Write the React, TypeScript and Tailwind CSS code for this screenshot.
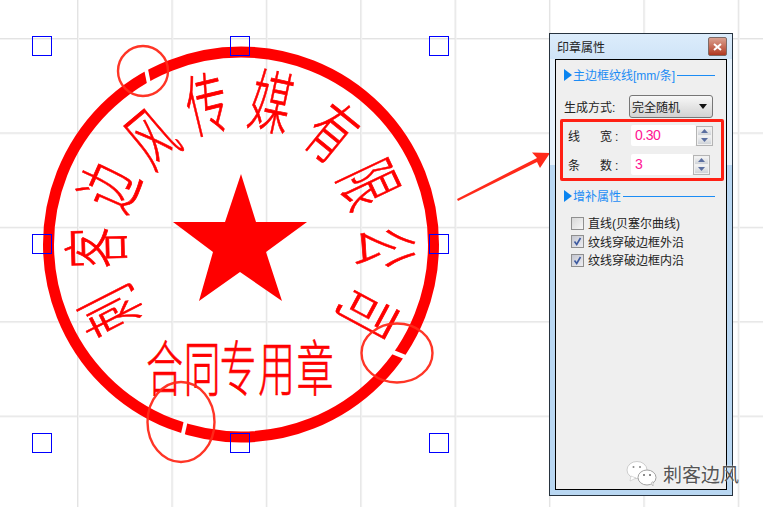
const stampFont = { fontFamily: '"Noto Sans CJK SC", sans-serif' };

const cx = 241;
const cy = 244.5;
const arc: [string, number, number][] = [
  ["刺", 107, 313],
  ["客", 92, 248],
  ["边", 105, 185],
  ["风", 149, 135],
  ["传", 206, 100],
  ["媒", 272, 98],
  ["有", 335, 129],
  ["限", 373, 182],
  ["公", 390, 248],
  ["司", 372, 315],
];
const bottom: [string, number][] = [
  ["合", 164.5],
  ["同", 202],
  ["专", 238],
  ["用", 276.5],
  ["章", 315],
];
const handles: [number, number][] = [
  [32, 36], [230, 36], [429, 36],
  [32, 234], [429, 234],
  [32, 433], [230, 433], [429, 433],
];

function Stamp() {
  return (
    <svg width="763" height="507" className="absolute left-0 top-0" style={stampFont}>
      <circle cx={cx} cy={cy} r="192.5" fill="none" stroke="#ff0000" strokeWidth="11" />
      <path d="M143 64 L147 84 L151 84 L147 64 Z" fill="#fff" />
      <path d="M184 420 L180 438 L184 438 L188 420 Z" fill="#fff" />
      <path d="M384 351 L404 359 L406 355 L386 347 Z" fill="#fff" />
      <polygon
        points="241,174 256,222 307,222 266,252 282,301 240,272 199,301 213,252 173,222 225,222"
        fill="#ff0000"
      />
      {arc.map(([c, x, y]) => {
        const a = (Math.atan2(x - cx, cy - y) * 180) / Math.PI;
        return (
          <text
            key={c}
            transform={`translate(${x} ${y}) rotate(${a}) scale(0.76 1.26)`}
            textAnchor="middle"
            dominantBaseline="central"
            fontSize="54"
            fontWeight="300"
            fill="#ff0000"
            stroke="#ff0000"
            strokeWidth="0.6"
          >
            {c}
          </text>
        );
      })}
      {bottom.map(([c, x]) => (
        <text
          key={c}
          transform={`translate(${x} 364.5) scale(0.68 1.12)`}
          textAnchor="middle"
          dominantBaseline="central"
          fontSize="54"
          fontWeight="300"
          fill="#ff0000"
          stroke="#ff0000"
          strokeWidth="0.6"
        >
          {c}
        </text>
      ))}
      <circle cx="143" cy="71" r="25" fill="none" stroke="#ff2a1a" strokeWidth="2.4" opacity="0.95" />
      <ellipse cx="181" cy="422" rx="33.5" ry="40" fill="none" stroke="#ff2a1a" strokeWidth="2.4" opacity="0.95" />
      <ellipse cx="397" cy="353" rx="35.5" ry="29.5" fill="none" stroke="#ff2a1a" strokeWidth="2.4" opacity="0.95" />
      {handles.map(([x, y]) => (
        <rect key={`${x}-${y}`} x={x + 0.5} y={y + 0.5} width="19" height="19" fill="none" stroke="#0000ff" strokeWidth="1" />
      ))}
      <polygon points="457,199 537,158 532,152.5 550,153 540,168 537,162 458,201" fill="#ff2a1a" />
    </svg>
  );
}

function SectionHeader({ label }: { label: string }) {
  return (
    <div className="flex h-4 items-center text-[12px] leading-4 text-[#1b8cf5]">
      <svg width="8" height="12" className="mr-px shrink-0">
        <polygon points="0,0 8,6 0,12" fill="#0a84f0" />
      </svg>
      <span className="whitespace-nowrap pt-px">{label}</span>
      <span className="ml-[2px] h-px grow bg-[#1b8cf5]" />
    </div>
  );
}

function Spinner() {
  return (
    <div className="flex h-[20px] w-[17px] flex-col gap-[1px] border border-[#b4b4b4] bg-[#f0f0f0] p-px">
      <div className="flex grow items-center justify-center bg-gradient-to-b from-[#f4f4f4] to-[#cfd3d8]">
        <svg width="7" height="4"><polygon points="3.5,0 7,4 0,4" fill="#5a6ea0" /></svg>
      </div>
      <div className="flex grow items-center justify-center bg-gradient-to-b from-[#f4f4f4] to-[#cfd3d8]">
        <svg width="7" height="4"><polygon points="0,0 7,0 3.5,4" fill="#5a6ea0" /></svg>
      </div>
    </div>
  );
}

function NumberRow({ a, b, value, w }: { a: string; b: string; value: string; w: string }) {
  return (
    <div className="flex h-[21px] items-center">
      <span className="w-[12px] pt-[2px] text-center">{a}</span>
      <span className="ml-[20px] w-[12px] pt-[2px] text-center">{b}</span>
      <span className="w-[19px] pl-[3px] pt-[2px]">:</span>
      <div className={`${w} flex h-[21px] items-center rounded-[2px] bg-white pl-[4px] text-[14px] tracking-[-0.5px] text-[#ff1493]`}>
        {value}
      </div>
      <Spinner />
    </div>
  );
}

function Check({ label, checked }: { label: string; checked?: boolean }) {
  return (
    <div className="flex h-[18.5px] items-center gap-[4px] text-[12px] text-[#222]">
      <div
        className={`flex h-[13px] w-[13px] items-center justify-center border border-[#8f8f8f] bg-gradient-to-br ${
          checked ? "from-[#c4c6d0] to-[#eeeef2]" : "from-[#d8d8d8] to-[#f6f6f6]"
        }`}
      >
        {checked && (
          <svg width="9" height="9" viewBox="0 0 9 9">
            <path d="M1.5 4.5 L3.7 7.5 L7.5 1" fill="none" stroke="#3d5aa0" strokeWidth="1.6" />
          </svg>
        )}
      </div>
      <span className="whitespace-nowrap pt-[2px]">{label}</span>
    </div>
  );
}

function Panel() {
  return (
    <div
      className="absolute left-[549px] top-[33px] flex h-[463px] w-[184px] flex-col border border-[#27333f] bg-[linear-gradient(to_bottom,#e6f1fb_131px,#b9d7f2_131px)] px-[5px] pb-[5px]"
      style={{ fontFamily: '"Liberation Sans", "Noto Sans CJK SC", sans-serif' }}
    >
      <div className="-mx-[5px] flex h-[25px] items-center justify-between bg-gradient-to-b from-[#dcecfb] to-[#cfe4f7] pl-[7px] pr-[5px] text-[12px] text-[#222]">
        <span className="pt-[2px]">印章属性</span>
        <div className="flex h-[19px] w-[19px] items-center justify-center rounded-[2px] border border-[#7d6a66] bg-gradient-to-b from-[#d9a090] to-[#b0361e]">
          <svg width="9" height="8" viewBox="0 0 9 8">
            <path d="M1 1 L8 7 M8 1 L1 7" stroke="#fff" strokeWidth="2" />
          </svg>
        </div>
      </div>
      <div className="flex grow flex-col border border-black bg-[#efefef] pl-[8px] pr-[11px] pt-[7px] text-[12px] text-[#222]">
        <SectionHeader label="主边框纹线[mm/条]" />
        <div className="mt-[12px] flex h-[23px] items-center">
          <span className="w-[65px] whitespace-nowrap pt-[2px]">生成方式:</span>
          <div className="flex h-[23px] w-[84px] items-center justify-between rounded-[3px] border border-[#777] bg-gradient-to-b from-[#f8f8f8] to-[#d2d2d2] pl-[2px] pr-[5px]">
            <span className="pt-[3px]">完全随机</span>
            <svg width="8" height="5"><polygon points="0,0 8,0 4,5" fill="#111" /></svg>
          </div>
        </div>
        <div className="-ml-[4px] mt-px h-[62px] w-[164px] rounded-[2px] border-[3px] border-[#ff2014] pl-[5px] pt-[3px]">
          <NumberRow a="线" b="宽" value="0.30" w="w-[65px]" />
          <div className="h-[8px]" />
          <NumberRow a="条" b="数" value="3" w="w-[62px]" />
        </div>
        <div className="mt-[7px]"><SectionHeader label="增补属性" /></div>
        <div className="mt-[10px] pl-[7px]">
          <Check label="直线(贝塞尔曲线)" />
          <Check label="纹线穿破边框外沿" checked />
          <Check label="纹线穿破边框内沿" checked />
        </div>
      </div>
    </div>
  );
}

function Watermark() {
  return (
    <div className="absolute left-[626px] top-[460px] flex items-center gap-[6px]" style={stampFont}>
      <svg width="31" height="27" viewBox="0 0 31 27">
        <ellipse cx="11" cy="10" rx="10" ry="8.5" fill="#fff" stroke="#bbb" strokeWidth="0.7" />
        <polygon points="5,16 4,21 10,18" fill="#fff" stroke="#bbb" strokeWidth="0.5" />
        <ellipse cx="21" cy="17.5" rx="9" ry="7.5" fill="#fff" stroke="#999" strokeWidth="0.9" />
        <polygon points="25,23 27,26 27,21.5" fill="#fff" stroke="#999" strokeWidth="0.5" />
        <circle cx="7.5" cy="7" r="1" fill="#888" />
        <circle cx="14" cy="7" r="1" fill="#888" />
        <circle cx="18" cy="15" r="1" fill="#666" />
        <circle cx="24" cy="15" r="1" fill="#666" />
      </svg>
      <span className="whitespace-nowrap text-[19px] leading-6 text-[#555] [text-shadow:0_0_2px_#fff]">刺客边风</span>
    </div>
  );
}

export default function App() {
  return (
    <div className="relative h-[507px] w-[763px] overflow-hidden bg-white bg-[linear-gradient(to_right,#e3e3e3_1px,#f3f3f3_1px,#f3f3f3_2px,transparent_2px),linear-gradient(to_bottom,#e3e3e3_1px,#f3f3f3_1px,#f3f3f3_2px,transparent_2px)] bg-[size:94.4px_94.4px] bg-[position:77px_38px]">
      <Stamp />
      <Panel />
      <Watermark />
    </div>
  );
}
